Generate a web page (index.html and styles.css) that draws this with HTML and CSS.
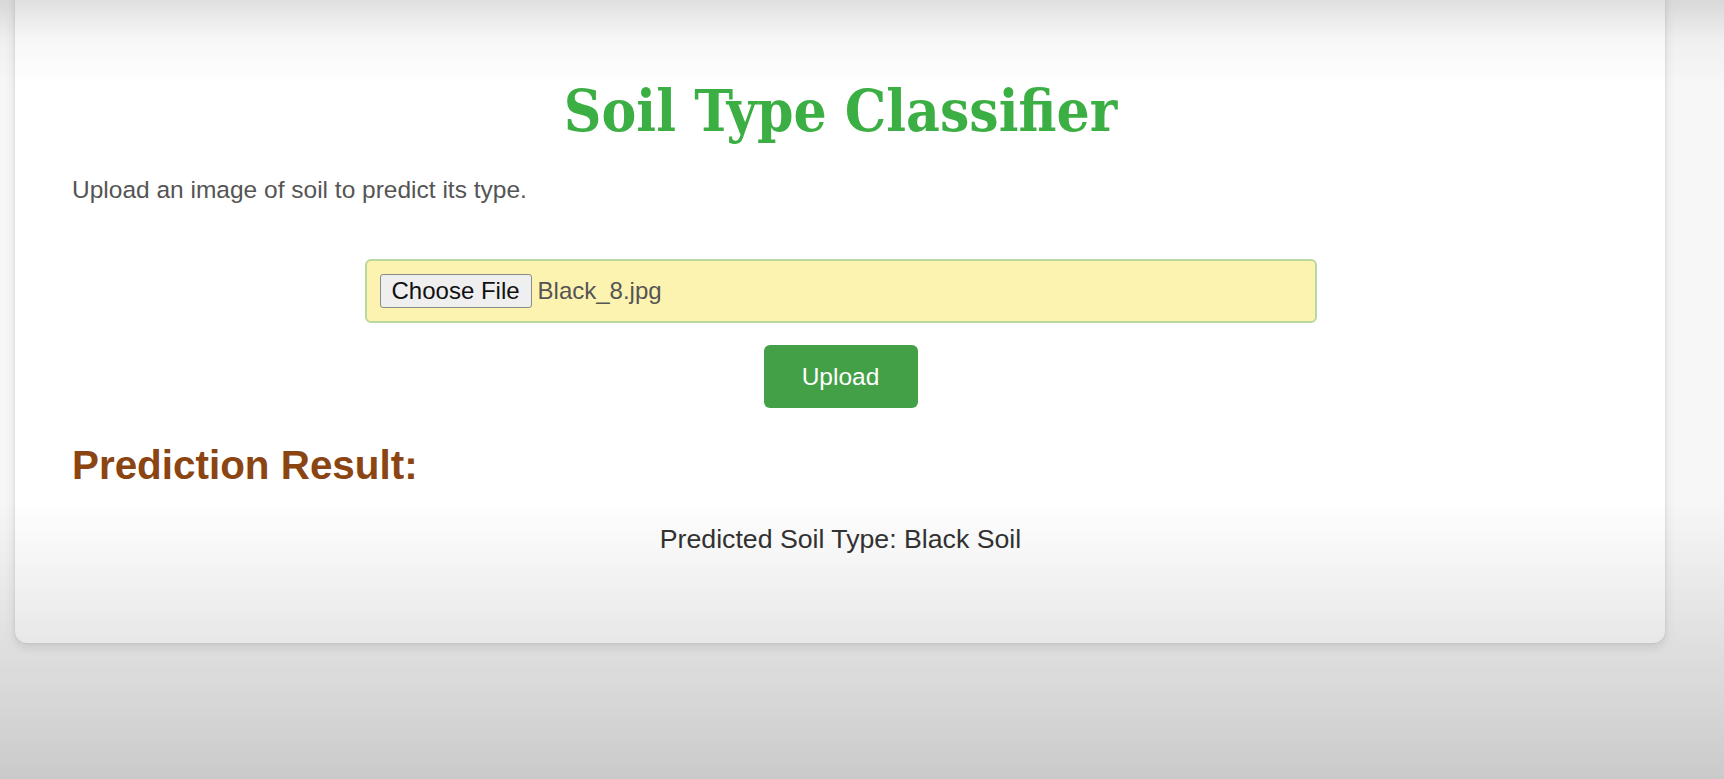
FILE: index.html
```html
<!DOCTYPE html>
<html lang="en">
<head>
<meta charset="utf-8">
<title>Soil Type Classifier</title>
<link rel="stylesheet" href="styles.css">
</head>
<body>
<main class="card">
  <h1 class="title">Soil Type Classifier</h1>
  <p class="lead">Upload an image of soil to predict its type.</p>
  <form class="upload-form">
    <div class="file-field">
      <span class="file-btn">Choose File</span>
      <span class="file-name">Black_8.jpg</span>
    </div>
    <button type="button" class="upload-btn">Upload</button>
  </form>
  <h2 class="result-title">Prediction Result:</h2>
  <p class="result-text">Predicted Soil Type: Black Soil</p>
</main>
<div class="vignette"></div>
</body>
</html>
```

FILE: styles.css
```css
html, body {
  margin: 0;
  padding: 0;
}
body {
  width: 1724px;
  height: 779px;
  overflow: hidden;
  background: #f7f7f7;
  font-family: "Liberation Sans", Arial, sans-serif;
}
.card {
  box-sizing: border-box;
  width: 1650px;
  margin: -12px 0 0 15px;
  padding: 12px 56px 0 57px;
  height: 655px;
  background: #ffffff;
  border-radius: 12px;
  box-shadow: 0 4px 12px rgba(0, 0, 0, 0.12), 0 0 3px rgba(0, 0, 0, 0.08);
  display: flex;
  flex-direction: column;
}
.title {
  margin: 76px 0 0;
  text-align: center;
  font-family: "DejaVu Serif Condensed", "DejaVu Serif", serif;
  font-stretch: condensed;
  font-weight: bold;
  font-size: 58px;
  line-height: 70px;
  color: #3caf44;
}
.lead {
  margin: 28px 0 0;
  font-size: 24.5px;
  line-height: 32px;
  color: #555555;
}
.upload-form {
  margin-top: 53px;
  display: flex;
  flex-direction: column;
  align-items: center;
  gap: 22px;
}
.file-field {
  box-sizing: border-box;
  width: 952px;
  height: 64px;
  display: flex;
  align-items: center;
  gap: 6px;
  padding: 0 13px;
  background: #fdf3b0;
  border: 2px solid #b9d99e;
  border-radius: 6px;
  font-size: 24px;
}
.file-btn {
  box-sizing: border-box;
  height: 34px;
  padding: 0 11px;
  display: flex;
  align-items: center;
  background: #efefef;
  border: 1px solid #8a8a8a;
  border-radius: 3px;
  color: #111111;
}
.file-name {
  color: #555555;
}
.upload-btn {
  width: 154px;
  height: 63px;
  border: none;
  border-radius: 6px;
  background: #43a047;
  color: #ffffff;
  font-family: "Liberation Sans", Arial, sans-serif;
  font-size: 24.5px;
}
.result-title {
  margin: 32px 0 0;
  font-size: 40.4px;
  line-height: 50px;
  font-weight: bold;
  color: #8b4513;
}
.result-text {
  margin: 32px 0 0;
  text-align: center;
  font-size: 26.7px;
  line-height: 34px;
  color: #333333;
}
.vignette {
  position: fixed;
  inset: 0;
  pointer-events: none;
  background:
    linear-gradient(to bottom, rgba(0,0,0,0.12) 0px, rgba(0,0,0,0.03) 40px, rgba(0,0,0,0) 85px),
    linear-gradient(to bottom, rgba(0,0,0,0) 500px, rgba(0,0,0,0.09) 640px, rgba(0,0,0,0.18) 779px);
}
```
